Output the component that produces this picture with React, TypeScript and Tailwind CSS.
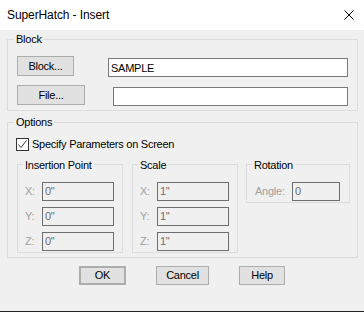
import type { ReactNode } from "react";
import clsx from "clsx";

// SuperHatch - Insert dialog (Win10 classic dialog look)

function Group({ title, className, legendClass, children }: { title: string; className?: string; legendClass?: string; children: ReactNode }) {
  return (
    <fieldset className={clsx("border border-[#dcdcdc] m-0 p-0 min-w-0", className)}>
      <legend className={clsx("leading-[12px] text-black", legendClass)}>{title}</legend>
      {children}
    </fieldset>
  );
}

function Btn({ label, className }: { label: string; className?: string }) {
  return (
    <button
      type="button"
      className={clsx("bg-[#e1e1e1] border border-[#adadad] text-black text-[11px] leading-none flex items-center justify-center", className)}
    >
      {label}
    </button>
  );
}

function Field({ label, value }: { label: string; value: string }) {
  return (
    <div className="flex items-center h-[19px]">
      <span className="w-[17px] text-[#a0a0a0]">{label}</span>
      <input
        readOnly
        value={value}
        className="w-[72px] h-[19px] border border-[#6e6e6e] bg-[#f0f0f0] px-[2px] text-[#6d6d6d] outline-none"
      />
    </div>
  );
}

export default function App() {
  return (
    <div className="w-[364px] h-[312px] bg-[#f0f0f0] flex flex-col font-['Liberation_Sans',Arial,sans-serif] text-[11px] tracking-[-0.25px] text-black overflow-hidden">
      {/* title bar */}
      <div className="h-[30px] bg-white flex items-center justify-between pl-[7px] pr-[10px] shrink-0">
        <span className="text-[12px] tracking-[-0.1px]">SuperHatch - Insert</span>
        <svg width="10" height="10" viewBox="0 0 10 10">
          <path d="M0.5 0.5L9.5 9.5M9.5 0.5L0.5 9.5" stroke="#000" strokeWidth="1" fill="none" />
        </svg>
      </div>

      <div className="flex-1 flex flex-col pl-[7px] pr-[6px]">
        {/* Block */}
        <Group title="Block" className="mt-[3px]" legendClass="ml-[6px] px-[2px]">
          <div className="pt-[11px] pl-[9px] pr-[9px] pb-[4px] flex flex-col">
            <div className="flex items-start">
              <Btn label="Block..." className="w-[57px] h-[20px]" />
              <input readOnly value="SAMPLE" className="ml-[34px] mt-[2px] flex-1 min-w-0 h-[19px] border border-[#7a7a7a] bg-white px-[2px] outline-none" />
            </div>
            <div className="flex items-start mt-[8px]">
              <Btn label="File..." className="w-[68px] h-[20px]" />
              <input readOnly value="" className="ml-[28px] mt-[2px] flex-1 min-w-0 h-[19px] border border-[#7a7a7a] bg-white px-[2px] outline-none" />
            </div>
          </div>
        </Group>

        {/* Options */}
        <Group title="Options" className="mt-[5px]" legendClass="ml-[6px] px-[2px]">
          <div className="pt-[8px] pl-[8px] pb-[4px]">
            <div className="flex items-center">
              <div className="w-[13px] h-[13px] border border-[#333] bg-white flex items-center justify-center">
                <svg width="11" height="11" viewBox="0 0 11 11">
                  <path d="M1.5 5.5L4 8.5L9.5 1.5" stroke="#333" strokeWidth="1" fill="none" />
                </svg>
              </div>
              <span className="ml-[3px]">Specify Parameters on Screen</span>
            </div>

            <div className="flex items-start mt-[6px] pl-[1px]">
              <Group title="Insertion Point" className="w-[106px]" legendClass="ml-[5px] px-[2px]">
                <div className="pt-[11px] pl-[7px] pb-[1px] flex flex-col gap-[6px]">
                  <Field label="X:" value={'0"'} />
                  <Field label="Y:" value={'0"'} />
                  <Field label="Z:" value={'0"'} />
                </div>
              </Group>
              <Group title="Scale" className="w-[106px] ml-[9px]" legendClass="ml-[5px] px-[2px]">
                <div className="pt-[11px] pl-[7px] pb-[1px] flex flex-col gap-[6px]">
                  <Field label="X:" value={'1"'} />
                  <Field label="Y:" value={'1"'} />
                  <Field label="Z:" value={'1"'} />
                </div>
              </Group>
              <Group title="Rotation" className="w-[104px] ml-[8px]" legendClass="ml-[5px] px-[2px]">
                <div className="pt-[11px] pl-[8px] pb-[1px] flex items-center">
                  <span className="w-[37px] text-[#a0a0a0]">Angle:</span>
                  <input readOnly value="0" className="w-[48px] h-[19px] border border-[#6e6e6e] bg-[#f0f0f0] px-[2px] text-[#6d6d6d] outline-none" />
                </div>
              </Group>
            </div>
          </div>
        </Group>

        {/* buttons */}
        <div className="flex items-center mt-[8px] ml-[72px]">
          <Btn label="OK" className="w-[47px] h-[19px] border-2 border-[#0078d7]" />
          <Btn label="Cancel" className="w-[53px] h-[19px] ml-[30px]" />
          <Btn label="Help" className="w-[46px] h-[19px] ml-[30px]" />
        </div>
      </div>

      <div className="h-[1px] bg-[#222] shrink-0" />
    </div>
  );
}
